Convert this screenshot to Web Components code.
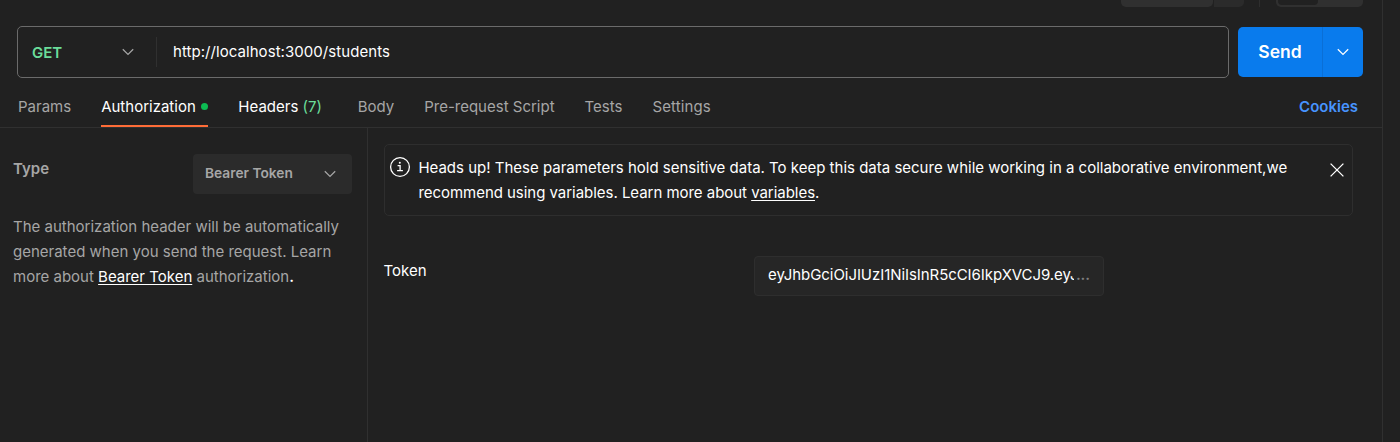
<!DOCTYPE html>
<html lang="en">
<head>
<meta charset="utf-8">
<title>Request</title>
<style>
html,body{margin:0;height:100%;background:#212121;overflow:hidden}
body{font:15px/25px Inter,"Liberation Sans",sans-serif;color:#fff}
</style>
</head>
<body>
<request-pane></request-pane>
<script>
const define = (name, html) => customElements.define(name, class extends HTMLElement {
  constructor() {
    super();
    const t = document.createElement('template');
    t.innerHTML = html;
    this.attachShadow({mode: 'open'}).append(t.content.cloneNode(true));
  }
});

define('chevron-icon', `<style>:host{display:block;width:12px;height:8px;color:#a6a6a6}svg{display:block}</style>
<svg width="12" height="8" viewBox="0 0 12 8" fill="none" stroke="currentColor" stroke-width="1.25"><path d="M.8 1.2 6 6.4l5.2-5.2"/></svg>`);

define('top-strip', `<style>
:host{display:flex;height:26px;padding-left:1121px;align-items:flex-start}
i{display:block;height:7px;background:#303030}
.save{width:92px;border-radius:0 0 5px 5px}
.more{width:30px;margin-left:1px;background:#2b2b2b;border-radius:0 0 5px 0}
.line{width:1px;margin-left:15px;background:#2e2e2e}
.modes{width:87px;margin-left:16px;border-radius:0 0 5px 5px}
.modes b{display:block;width:40px;height:5px;margin-left:2px;background:#212121;border-radius:0 0 4px 4px}
</style><i class="save"></i><i class="more"></i><i class="line"></i><i class="modes"><b></b></i>`);

define('url-bar', `<style>
:host{display:flex;align-items:center;gap:9px;padding:0 19px 0 17px;height:52px}
.field{box-sizing:border-box;display:flex;align-items:center;width:1212px;height:52px;border:1px solid #6b6b6b;border-radius:5px}
.method{box-sizing:border-box;display:flex;align-items:center;justify-content:space-between;width:139px;height:30px;padding:0 22px 0 14px;border-right:1px solid #303030;color:#6bdd9a;font-weight:600}
.url{margin-left:16px;padding-bottom:2px;letter-spacing:.055px}
.send{display:flex;width:125px;height:50px;border-radius:5px;background:#097bed;overflow:hidden}
.label{width:84px;text-align:center;font:600 17.5px/50px Inter,sans-serif;border-right:1px solid #0a6fd6}
.drop{flex:1;display:grid;place-items:center}
.drop chevron-icon{color:#fff}
</style>
<div class="field"><div class="method"><span>GET</span><chevron-icon></chevron-icon></div><span class="url">http://localhost:3000/students</span></div>
<div class="send"><span class="label">Send</span><span class="drop"><chevron-icon></chevron-icon></span></div>`);

define('tab-item', `<style>
:host{display:flex;align-items:center;height:41px;padding-top:2px;color:#a6a6a6;border-bottom:2px solid transparent;white-space:pre;box-sizing:border-box}
:host([active]){border-color:#ff6c37}
:host([active]),:host([filled]){color:#fff}
</style><slot></slot>`);

define('tab-row', `<style>
:host{display:flex;align-items:flex-end;height:49px;padding:0 24px 0 18px;border-bottom:1px solid #303030}
tab-item{margin-right:30px}
.dot{width:7px;height:7px;border-radius:50%;background:#0cbb52;margin-left:5px}
.count{color:#6bdd9a}
.cookies{margin-left:auto;font-weight:600;color:#4794ff;line-height:41px}
</style>
<tab-item>Params</tab-item><tab-item active>Authorization<span class="dot"></span></tab-item><tab-item filled style="margin-left:.6px;margin-right:35.7px">Headers <span class="count">(7)</span></tab-item><tab-item>Body</tab-item><tab-item>Pre-request Script</tab-item><tab-item>Tests</tab-item><tab-item style="letter-spacing:.12px">Settings</tab-item><span class="cookies">Cookies</span>`);

define('auth-type', `<style>
:host{box-sizing:border-box;display:block;width:368px;padding:26px 15px 0 13px;border-right:1px solid #303030;color:#a6a6a6}
.row{display:flex;justify-content:space-between;font-weight:600}
.name{padding-top:2px}
.select{box-sizing:border-box;display:flex;align-items:center;justify-content:space-between;width:159px;height:40px;padding:0 16px 0 12px;border-radius:4px;background:#2b2b2b;font-size:13.75px;line-height:23px}
.select span{padding-bottom:1px}
p{margin:20px 0 0;white-space:nowrap}
u,b{color:#fff;font-weight:400;text-underline-offset:2px}
b{font-weight:600}
</style>
<div class="row"><span class="name">Type</span><div class="select"><span>Bearer Token</span><chevron-icon></chevron-icon></div></div>
<p>The authorization header will be automatically<br>generated when you send the request. Learn<br>more about <u>Bearer Token</u> authorization<b>.</b></p>`);

define('notice-box', `<style>
:host{box-sizing:border-box;display:flex;align-items:flex-start;width:969px;height:72px;padding:10px 8px 0 4px;border:1px solid #2e2e2e;border-radius:5px}
.info{margin:1px 7.4px 0 0;flex:none}
p{margin:0;flex:1;white-space:nowrap}
.close{margin-top:8px;flex:none}
</style>
<svg class="info" width="22" height="22" viewBox="0 0 22 22" fill="none" stroke="#fff" stroke-width="1.3"><circle cx="11" cy="11" r="9.4"/><path d="M8.6 9.6h2.5v5M8.1 14.6h5.8"/><circle cx="10.8" cy="6.8" r="1" fill="#fff" stroke="none"/></svg>
<p><slot></slot></p>
<svg class="close" width="14" height="14" viewBox="0 0 14 14" stroke="#fff" stroke-width="1.3"><path d="m.6.6 12.8 12.8M13.4.6.6 13.4"/></svg>`);

define('token-field', `<style>
:host{display:flex;margin-top:40px}
.name{width:370.4px;margin-left:-.4px;padding-top:2px}
.input{box-sizing:border-box;display:flex;align-items:center;width:350px;height:40px;padding:0 13px 3px;border:1px solid #2e2e2e;border-radius:4px;background:#262626}
.value{width:307px;overflow:hidden;white-space:nowrap;letter-spacing:-.065px}
.dots{color:#808080;margin-left:2px;font-weight:600;letter-spacing:-.1px}
</style>
<span class="name">Token</span><div class="input"><span class="value">eyJhbGciOiJIUzI1NiIsInR5cCI6IkpXVCJ9.eyJ</span><span class="dots">...</span></div>`);

define('request-pane', `<style>
:host{display:flex;height:442px}
main{display:flex;flex-direction:column;width:1382px;border-right:1px solid #303030}
.split{display:flex;flex:1}
section{padding:16px 0 0 16px}
u{text-underline-offset:2px}
.second{letter-spacing:-.035px}
</style>
<main><top-strip></top-strip><url-bar></url-bar><tab-row></tab-row>
<div class="split"><auth-type></auth-type><section><notice-box>Heads up! These parameters hold sensitive data. To keep this data secure while working in a collaborative environment,we<br><span class="second">recommend using variables. Learn more about <u>variables</u>.</span></notice-box><token-field></token-field></section></div></main>`);
</script>
</body>
</html>
